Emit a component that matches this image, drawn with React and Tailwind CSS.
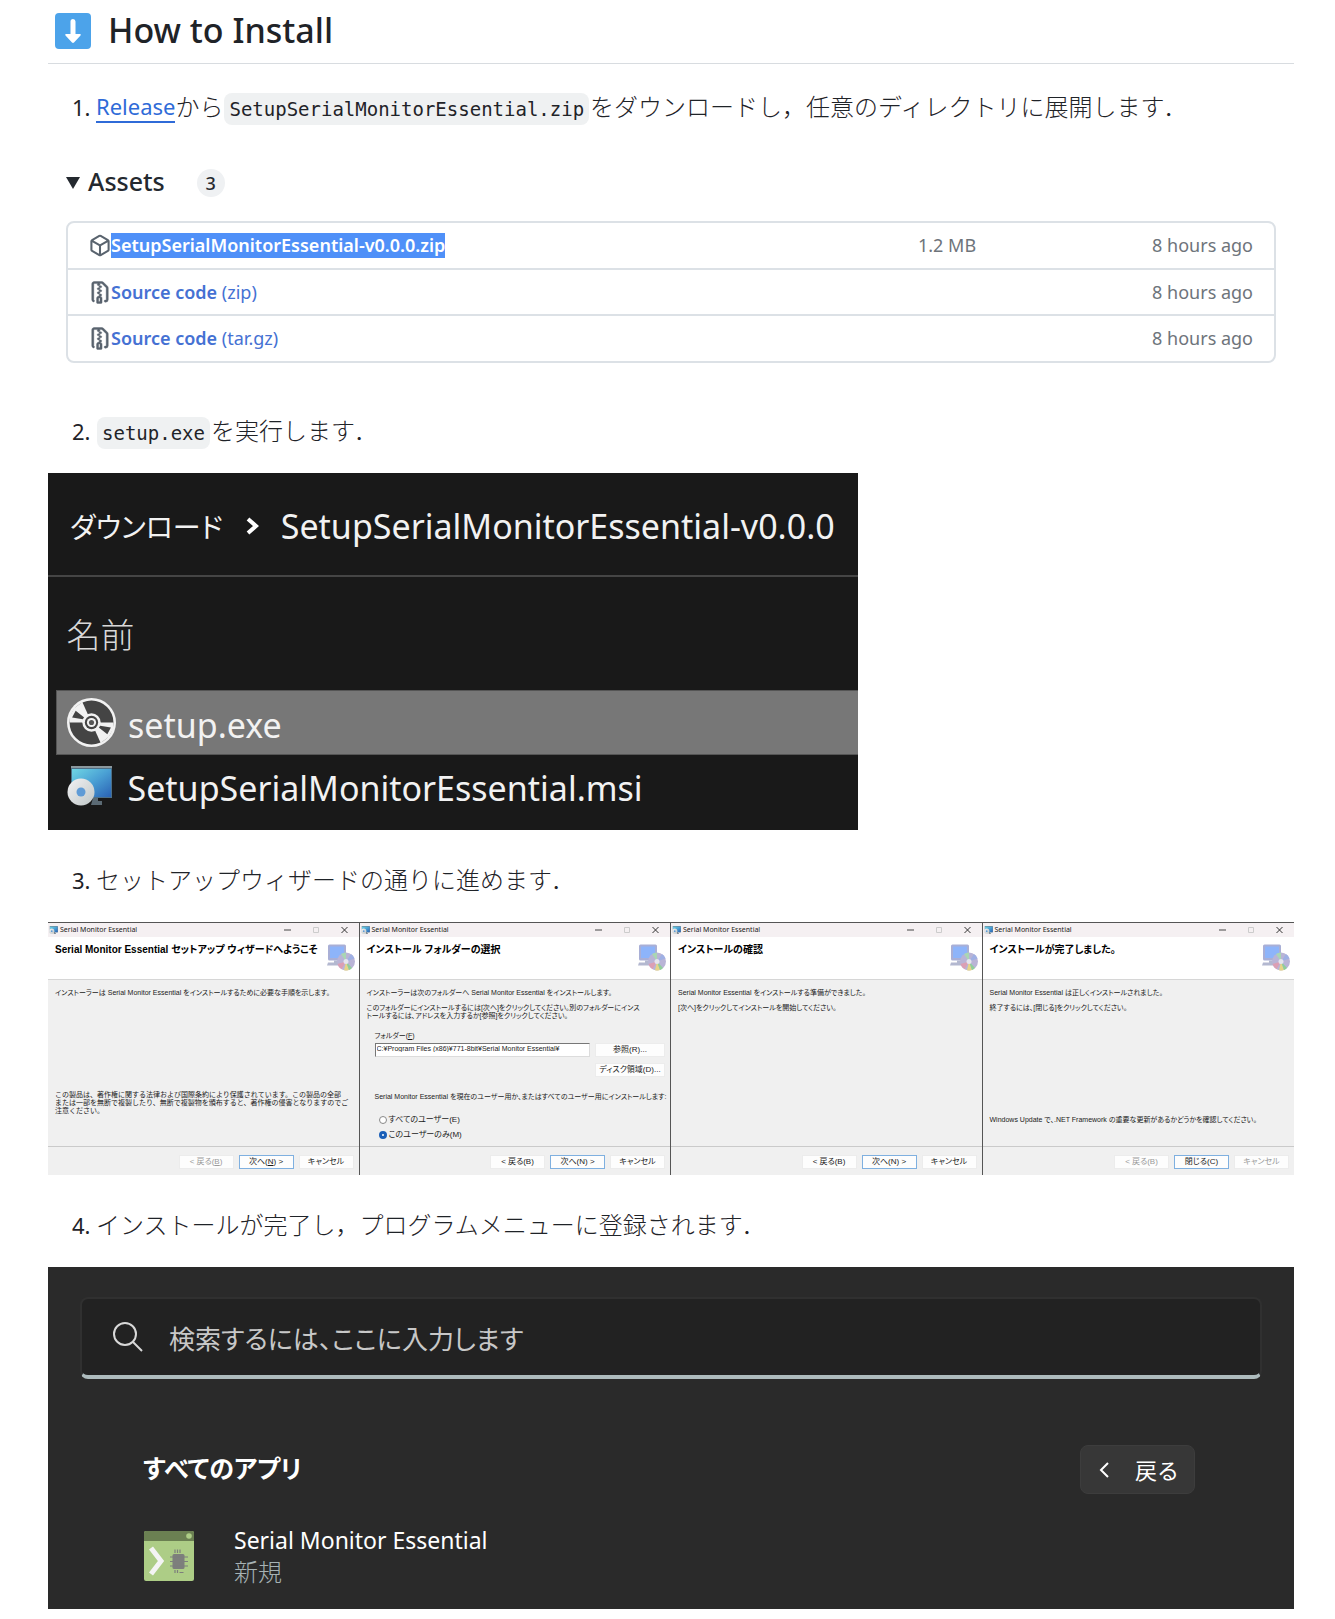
import React from "react";

const sans = "font-['Noto_Sans','Noto_Sans_CJK_JP',sans-serif]";
const jp = "font-['Noto_Sans_CJK_JP',sans-serif]";
const wiz = "font-['Liberation_Sans','Noto_Sans_CJK_JP',sans-serif]";

function DownArrowIcon() {
  return (
    <svg viewBox="0 0 36 36" className="h-9 w-9 shrink-0" aria-hidden="true">
      <rect width="36" height="36" rx="4" fill="#4ca3ea" />
      <path d="M15.500 8.500a2.500 2.500 0 0 1 5 0V21h4.500q1.500 0 .5 1.500l-6.500 7q-1 .8-2 0l-6.500-7Q9.500 21 11 21h4.500z" fill="#fff" />
    </svg>
  );
}

function CubeIcon() {
  return (
    <svg viewBox="0 0 16 16" className="h-[23px] w-[22px] shrink-0" fill="#59636e" aria-hidden="true">
      <path d="m8.878.392 5.25 3.045c.54.314.872.89.872 1.514v6.098a1.75 1.75 0 0 1-.872 1.514l-5.25 3.045a1.75 1.75 0 0 1-1.756 0l-5.25-3.045A1.75 1.75 0 0 1 1 11.049V4.951c0-.624.332-1.201.872-1.514L7.122.392a1.75 1.75 0 0 1 1.756 0ZM7.875 1.69l-4.63 2.685L8 7.133l4.755-2.758-4.63-2.685a.248.248 0 0 0-.25 0ZM2.5 5.677v5.372c0 .09.047.171.125.216l4.625 2.683V8.432Zm6.25 8.271 4.625-2.683a.25.25 0 0 0 .125-.216V5.677L8.75 8.432Z" />
    </svg>
  );
}

function FileZipIcon() {
  return (
    <svg viewBox="0 0 16 16" className="h-[23px] w-[22px] shrink-0" fill="#59636e" stroke="#59636e" strokeWidth="0.3" aria-hidden="true">
      <path d="M3.5 1.75v11.5c0 .09.048.173.126.217a.75.75 0 0 1-.752 1.298A1.748 1.748 0 0 1 2 13.25V1.75C2 .784 2.784 0 3.75 0h5.586c.464 0 .909.185 1.237.513l2.914 2.914c.329.328.513.773.513 1.237v8.586A1.75 1.75 0 0 1 12.25 15h-.5a.75.75 0 0 1 0-1.5h.5a.25.25 0 0 0 .25-.25V4.664a.25.25 0 0 0-.073-.177L9.513 1.573a.25.25 0 0 0-.177-.073H7.25a.75.75 0 0 1 0 1.5h-.5a.75.75 0 0 1 0-1.5h-3a.25.25 0 0 0-.25.25Zm3.75 8.75h.5c.966 0 1.75.784 1.75 1.75v3a.75.75 0 0 1-.75.75h-2.5a.75.75 0 0 1-.75-.75v-3c0-.966.784-1.75 1.75-1.75ZM6 5.25a.75.75 0 0 1 .75-.75h.5a.75.75 0 0 1 0 1.5h-.5A.75.75 0 0 1 6 5.25Zm.75 2.25h.5a.75.75 0 0 1 0 1.5h-.5a.75.75 0 0 1 0-1.5Zm1.25-1.5h.5a.75.75 0 0 1 0 1.5H8a.75.75 0 0 1 0-1.5Zm0-3h.5a.75.75 0 0 1 0 1.5H8A.75.75 0 0 1 8 3Zm0 6h.5a.75.75 0 0 1 0 1.500H8A.75.75 0 0 1 8 9Zm-1 3.250v2.250h1v-2.250a.25.25 0 0 0-.25-.25h-.5a.25.25 0 0 0-.25.25Z" />
    </svg>
  );
}

function DiscIcon() {
  return (
    <svg viewBox="0 0 48 48" className="h-[49px] w-[49px] shrink-0" aria-hidden="true">
      <circle cx="24" cy="24" r="24" fill="#f2f2f2" />
      <circle cx="24" cy="24" r="21.5" fill="#444" />
      <path d="M24 24 2.500 24 3 17 7 10 15 4z" fill="#f2f2f2" />
      <path d="M24 24 45.500 24 45 31 41 38 33 44z" fill="#f2f2f2" />
      <path d="M20 21.500 8.500 12.500 5 19z M28 26.500 39.500 35.500 43 29z" fill="#444" />
      <circle cx="24" cy="24" r="9" fill="#f2f2f2" />
      <circle cx="24" cy="24" r="6.500" fill="#444" />
      <circle cx="24" cy="24" r="4.500" fill="#f2f2f2" />
      <circle cx="24" cy="24" r="2.500" fill="#555" />
    </svg>
  );
}

function MsiIcon({ className }) {
  return (
    <svg viewBox="0 0 46 40" className={className} aria-hidden="true">
      <defs>
        <linearGradient id="msi-screen" x1="0" y1="0" x2="1" y2="1">
          <stop offset="0" stopColor="#6fd6e4" />
          <stop offset="0.5" stopColor="#4aa0d4" />
          <stop offset="1" stopColor="#2a62b4" />
        </linearGradient>
        <linearGradient id="msi-disc" x1="0" y1="0" x2="1" y2="1">
          <stop offset="0" stopColor="#f2f2f4" />
          <stop offset="1" stopColor="#bfc6c6" />
        </linearGradient>
      </defs>
      <rect x="4" y="0" width="41" height="32" fill="#4d6f86" />
      <rect x="4" y="0" width="41" height="2" fill="#8b979d" />
      <rect x="5" y="3" width="39" height="28" fill="url(#msi-screen)" />
      <path d="M26 32h5v3h4v4H24z" fill="#5b6a74" />
      <circle cx="14" cy="26" r="13.500" fill="url(#msi-disc)" />
      <circle cx="14" cy="26" r="4.500" fill="#5f9bd6" />
    </svg>
  );
}

function WizardIcon() {
  return (
    <svg viewBox="0 0 28 27" className="h-[27px] w-7 shrink-0" aria-hidden="true">
      <rect x="1" y="0.500" width="18" height="16" rx="1.500" fill="#a9afd6" />
      <rect x="3" y="2.500" width="14" height="11.500" fill="#8db4fa" />
      <path d="M7 16.500h7v2H7zM1 18.500h13l1 3H0z" fill="#b3b8d0" />
      <circle cx="19" cy="17.500" r="9" fill="#b9b4d6" />
      <path d="M19 17.500 14 10a9 9 0 0 1 5-1.500z" fill="#a9d6b4" />
      <path d="M19 17.500 24 10a9 9 0 0 1 3.500 4.500z" fill="#9fb0e4" />
      <path d="M19 17.500 10.500 20a9 9 0 0 0 4 5.200z" fill="#dc9fb4" />
      <path d="M19 17.500 17 26.300a9 9 0 0 0 5-.4z" fill="#e6d588" />
      <path d="M19 17.500 22 26a9 9 0 0 0 3-2z" fill="#8fcf9a" />
      <circle cx="19" cy="17.500" r="2.500" fill="#e4e4ee" />
    </svg>
  );
}

function AppIcon() {
  return (
    <svg viewBox="0 0 50 50" className="h-[50px] w-[50px] shrink-0" aria-hidden="true">
      <rect width="50" height="50" rx="2" fill="#adcd86" />
      <path d="M2 0h46a2 2 0 0 1 2 2v8H0V2a2 2 0 0 1 2-2z" fill="#6b8052" />
      <circle cx="45" cy="5" r="2.800" fill="#adcd86" />
      <path d="m7 17 10 13L7 43" fill="none" stroke="#f4f4f4" strokeWidth="5" />
      <rect x="28.500" y="23" width="12" height="15" rx="1.500" fill="#7d7f7c" />
      <path d="M31 18.500v3.500M33.500 18.500v3.500M36 18.500v3.500M31 39v3M33.500 39v3M35.500 41.500h4M26 26h18M26 30.500h18M26 35h18" stroke="#7d7f7c" strokeWidth="1.200" />
    </svg>
  );
}

function Step({ n, children }) {
  return (
    <p className="flex h-9 items-center pl-6 text-[24px] leading-9 font-light text-[#1f2328]">
      <span className="w-6 text-[22px] font-normal">{n}.</span>
      {children}
    </p>
  );
}

function Code({ children }) {
  return (
    <code className="mx-px mt-1 h-8 rounded-lg bg-[#eff1f2] px-[5px] font-['DejaVu_Sans_Mono',monospace] text-[19px] leading-8 font-normal">
      {children}
    </code>
  );
}

const assets = [
  { name: "SetupSerialMonitorEssential-v0.0.0.zip", size: "1.2 MB", selected: true },
  { name: "Source code", kind: "(zip)" },
  { name: "Source code", kind: "(tar.gz)" },
];

function Assets() {
  return (
    <details open className="mt-6 px-[18px] pt-4 pb-[17px]">
      <summary className="flex h-8 list-none items-center text-[#24292f]">
        <svg viewBox="0 0 14 12" className="mt-1 h-3 w-[14px]" aria-hidden="true">
          <path d="M0 0h14L7 12z" fill="#24292f" />
        </svg>
        <span className="ml-2 text-[25px] leading-8 font-medium">Assets</span>
        <span className="mt-1 ml-8 flex h-7 w-7 items-center justify-center rounded-full bg-[#eff1f3] text-[18px] font-medium">3</span>
      </summary>
      <div className="mt-6 rounded-lg border-2 border-[#dce1e6]">
        <table className="w-full text-[18px] text-[#6e747b]">
          <tbody>
            {assets.map((a, i) => (
              <tr key={i} className="h-[46px] border-t-2 border-[#dce1e6] first:border-t-0">
                <td className="pl-[21px]">
                  <a href="#asset" className="flex items-center text-[#4571d3]">
                    {a.selected ? <CubeIcon /> : <FileZipIcon />}
                    {a.selected ? (
                      <span className="bg-[#4f90f8] leading-[25px] font-semibold text-white">{a.name}</span>
                    ) : (
                      <span className="leading-[25px]">
                        <span className="font-semibold">{a.name}</span> {a.kind}
                      </span>
                    )}
                  </a>
                </td>
                <td className="w-[160px]">{a.size}</td>
                <td className="w-[196px] pr-[21px] text-right">8 hours ago</td>
              </tr>
            ))}
          </tbody>
        </table>
      </div>
    </details>
  );
}

function Explorer() {
  return (
    <section className="mt-6 w-[65%] bg-[#191919] pb-3 text-[34px] text-[#f2f2f2]">
      <nav className="flex h-[104px] items-center border-b-2 border-[#454545] pt-1 pl-[22px] leading-none">
        <span className={`${jp} text-[28px] [font-feature-settings:'palt']`}>ダウンロード</span>
        <svg viewBox="0 0 14 18" className="mx-[22px] h-[18px] w-[14px]" aria-hidden="true">
          <path d="m3 2 8 7-8 7" fill="none" stroke="#fff" strokeWidth="4" />
        </svg>
        <span>SetupSerialMonitorEssential-v0.0.0</span>
      </nav>
      <table className="ml-2 w-[calc(100%-8px)] text-left">
        <thead>
          <tr className="h-[113px]">
            <th className="pt-1 pl-[10px] font-light text-[#d8d8d8]">名前</th>
          </tr>
        </thead>
        <tbody>
          <tr className="h-16 border border-r-0 border-[#555] bg-[#777]">
            <td className="pl-[10px]">
              <span className="flex h-[62px] items-center gap-3">
                <DiscIcon />
                <span className="pt-[6px] leading-[56px]">setup.exe</span>
              </span>
            </td>
          </tr>
          <tr className="h-16">
            <td className="pl-[10px]">
              <span className="flex h-[62px] items-center gap-3">
                <span className="w-[49px]"><MsiIcon className="h-10 w-[46px]" /></span>
                <span className="pt-1 leading-[56px]">SetupSerialMonitorEssential.msi</span>
              </span>
            </td>
          </tr>
        </tbody>
      </table>
    </section>
  );
}

function WizButton({ children, primary, disabled, wide }) {
  return (
    <button
      disabled={disabled}
      className={`h-[14px] shrink-0 border bg-[#fdfdfd] text-center text-[8px] leading-[12px] ${wide ? "w-[70px]" : "w-[55px]"} ${
        primary ? "border-[#7fb0e0]" : "border-[#ececec]"
      } ${disabled ? "text-[#9a9a9a]" : "text-[#1a1a1a]"}`}
    >
      {children}
    </button>
  );
}

function Wizard({ title, children, buttons }) {
  return (
    <section className={`flex h-[253px] min-w-0 flex-col border-t border-r border-t-[#555] border-r-[#555] bg-[#f0f0f0] text-[7px] leading-[8px] whitespace-nowrap text-[#1a1a1a] last:border-r-0 [font-feature-settings:'palt'] ${wiz}`}>
      <header className="flex h-[14px] items-center bg-[#f5f0f2] pl-px">
        <MsiIcon className="h-2 w-[9px]" />
        <span className="ml-[2px] flex-1 font-['Noto_Sans',sans-serif] text-[7px]">Serial Monitor Essential</span>
        <svg viewBox="0 0 64 8" className="mr-[11px] h-2 w-16" fill="none" aria-hidden="true">
          <path d="M0 4h7" stroke="#444" />
          <path d="M29.500 1.500h5v5h-5z" stroke="#ccc" />
          <path d="m57.500 1 6 6m0-6-6 6" stroke="#333" />
        </svg>
      </header>
      <div className="flex h-[43px] justify-between border-b border-[#d6d6d6] bg-white pt-[7px] pr-1 pl-[7px]">
        <h3 className="text-[10px] leading-[11px] font-bold text-black">{title}</h3>
        <WizardIcon />
      </div>
      <div className="flex-1 pt-[9px] pl-[7px]">{children}</div>
      <footer className="flex h-[29px] items-start justify-end gap-[5px] border-t border-[#cacaca] pt-2 pr-[5px]">{buttons}</footer>
    </section>
  );
}

function Wizards() {
  return (
    <div className="mt-6 grid grid-cols-4">
      <Wizard
        title="Serial Monitor Essential セットアップ ウィザードへようこそ"
        buttons={<><WizButton disabled>&lt; 戻る(<u>B</u>)</WizButton><WizButton primary>次へ(<u>N</u>) &gt;</WizButton><WizButton>キャンセル</WizButton></>}
      >
        <p>インストーラーは Serial Monitor Essential をインストールするために必要な手順を示します。</p>
        <p className="mt-[94px] [font-feature-settings:normal]">
          この製品は、著作権に関する法律および国際条約により保護されています。この製品の全部<br />
          または一部を無断で複製したり、無断で複製物を頒布すると、著作権の侵害となりますのでご<br />
          注意ください。
        </p>
      </Wizard>
      <Wizard
        title="インストール フォルダーの選択"
        buttons={<><WizButton>&lt; 戻る(B)</WizButton><WizButton primary>次へ(N) &gt;</WizButton><WizButton>キャンセル</WizButton></>}
      >
        <p>インストーラーは次のフォルダーへ Serial Monitor Essential をインストールします。</p>
        <p className="mt-[7px]">
          このフォルダーにインストールするには[次へ]をクリックしてください。別のフォルダーにインス<br />
          トールするには、アドレスを入力するか[参照]をクリックしてください。
        </p>
        <div className="mt-3 pr-[5px] pl-2">
          <label htmlFor="folder">フォルダー(<u>F</u>)</label>
          <div className="mt-[3px] flex gap-[5px]">
            <input
              id="folder"
              defaultValue="C:¥Program Files (x86)¥771-8bit¥Serial Monitor Essential¥"
              className="h-[14px] min-w-0 flex-1 border border-[#dcdcdc] border-t-[#777] border-l-[#777] bg-white pb-1 pl-px text-[7px] leading-[8px]"
            />
            <WizButton wide>参照(R)...</WizButton>
          </div>
          <div className="mt-[6px] flex justify-end"><WizButton wide>ディスク領域(D)...</WizButton></div>
          <fieldset className="mt-4">
            <legend>Serial Monitor Essential を現在のユーザー用か、またはすべてのユーザー用にインストールします:</legend>
            <label className="mt-[14px] ml-1 flex h-[9px] items-center gap-[2px] text-[8px]">
              <input type="radio" name="scope" className="h-2 w-2 appearance-none rounded-full border border-[#888] bg-white" />
              すべてのユーザー(E)
            </label>
            <label className="mt-[6px] ml-1 flex h-[9px] items-center gap-[2px] text-[8px]">
              <input type="radio" name="scope" defaultChecked className="h-2 w-2 appearance-none rounded-full border-[3px] border-[#1a5fb8] bg-white" />
              このユーザーのみ(M)
            </label>
          </fieldset>
        </div>
      </Wizard>
      <Wizard
        title="インストールの確認"
        buttons={<><WizButton>&lt; 戻る(B)</WizButton><WizButton primary>次へ(N) &gt;</WizButton><WizButton>キャンセル</WizButton></>}
      >
        <p>Serial Monitor Essential をインストールする準備ができました。</p>
        <p className="mt-[7px]">[次へ]をクリックしてインストールを開始してください。</p>
      </Wizard>
      <Wizard
        title="インストールが完了しました。"
        buttons={<><WizButton disabled>&lt; 戻る(B)</WizButton><WizButton primary>閉じる(C)</WizButton><WizButton disabled>キャンセル</WizButton></>}
      >
        <p>Serial Monitor Essential は正しくインストールされました。</p>
        <p className="mt-[7px]">終了するには、[閉じる]をクリックしてください。</p>
        <p className="mt-[104px]">Windows Update で、.NET Framework の重要な更新があるかどうかを確認してください。</p>
      </Wizard>
    </div>
  );
}

function StartMenu() {
  return (
    <section className="mt-6 bg-[#2a2a2a] px-8 pt-[30px] pb-[21px] text-white">
      <div className="flex h-[82px] items-center rounded-lg border-2 border-b-4 border-[#303030] border-b-[#adbbbd] bg-[#222] pl-[31px]">
        <svg viewBox="0 0 30 30" className="h-[30px] w-[30px]" fill="none" stroke="#d8d8d8" strokeWidth="2" aria-hidden="true">
          <circle cx="12" cy="12" r="11" />
          <path d="m20 20 9 9" />
        </svg>
        <input
          aria-label="検索"
          placeholder="検索するには、ここに入力します"
          className={`ml-[26px] min-w-0 flex-1 bg-transparent text-[26px] placeholder:text-[#c8c8c8] [font-feature-settings:'palt'] ${jp}`}
        />
      </div>
      <div className="mt-[66px] flex h-[49px] items-center justify-between pr-[67px] pl-[63px]">
        <h3 className={`pb-1 text-[25px] font-bold [font-feature-settings:'palt'] ${jp}`}>すべてのアプリ</h3>
        <button className={`flex h-[49px] w-[115px] items-center gap-[26px] rounded-lg border border-[#3d3d3d] bg-[#373737] pl-[18px] text-[22px] ${jp}`}>
          <svg viewBox="0 0 10 16" className="h-4 w-[10px]" fill="none" stroke="#fff" strokeWidth="2" aria-hidden="true">
            <path d="M9 1 2 8l7 7" />
          </svg>
          戻る
        </button>
      </div>
      <div className="mt-[30px] flex items-center gap-10 pl-16">
        <AppIcon />
        <div>
          <p className="text-[23px] leading-8">Serial Monitor Essential</p>
          <p className="text-[24px] leading-8 font-light text-[#a6b2b4]">新規</p>
        </div>
      </div>
    </section>
  );
}

export default function App() {
  return (
    <main className={`bg-white pr-[41px] pb-[10px] pl-12 ${sans}`}>
      <h2 className="flex h-16 items-center gap-[17px] border-b border-[#d8dce0] pb-[2px] pl-[7px] text-[34px] font-medium text-[#1f2328]">
        <DownArrowIcon />
        How to Install
      </h2>
      <div className="mt-[25px]">
        <Step n={1}>
          <a href="#release" className="border-b-2 border-[#2f6bd8] text-[22px] leading-[30px] font-normal text-[#2f6bd8]">Release</a>
          から<Code>SetupSerialMonitorEssential.zip</Code>をダウンロードし，任意のディレクトリに展開します．
        </Step>
      </div>
      <Assets />
      <div className="mt-[33px]">
        <Step n={2}><Code>setup.exe</Code>を実行します．</Step>
      </div>
      <Explorer />
      <div className="mt-8">
        <Step n={3}>セットアップウィザードの通りに進めます．</Step>
      </div>
      <Wizards />
      <div className="mt-8">
        <Step n={4}>インストールが完了し，プログラムメニューに登録されます．</Step>
      </div>
      <StartMenu />
    </main>
  );
}
